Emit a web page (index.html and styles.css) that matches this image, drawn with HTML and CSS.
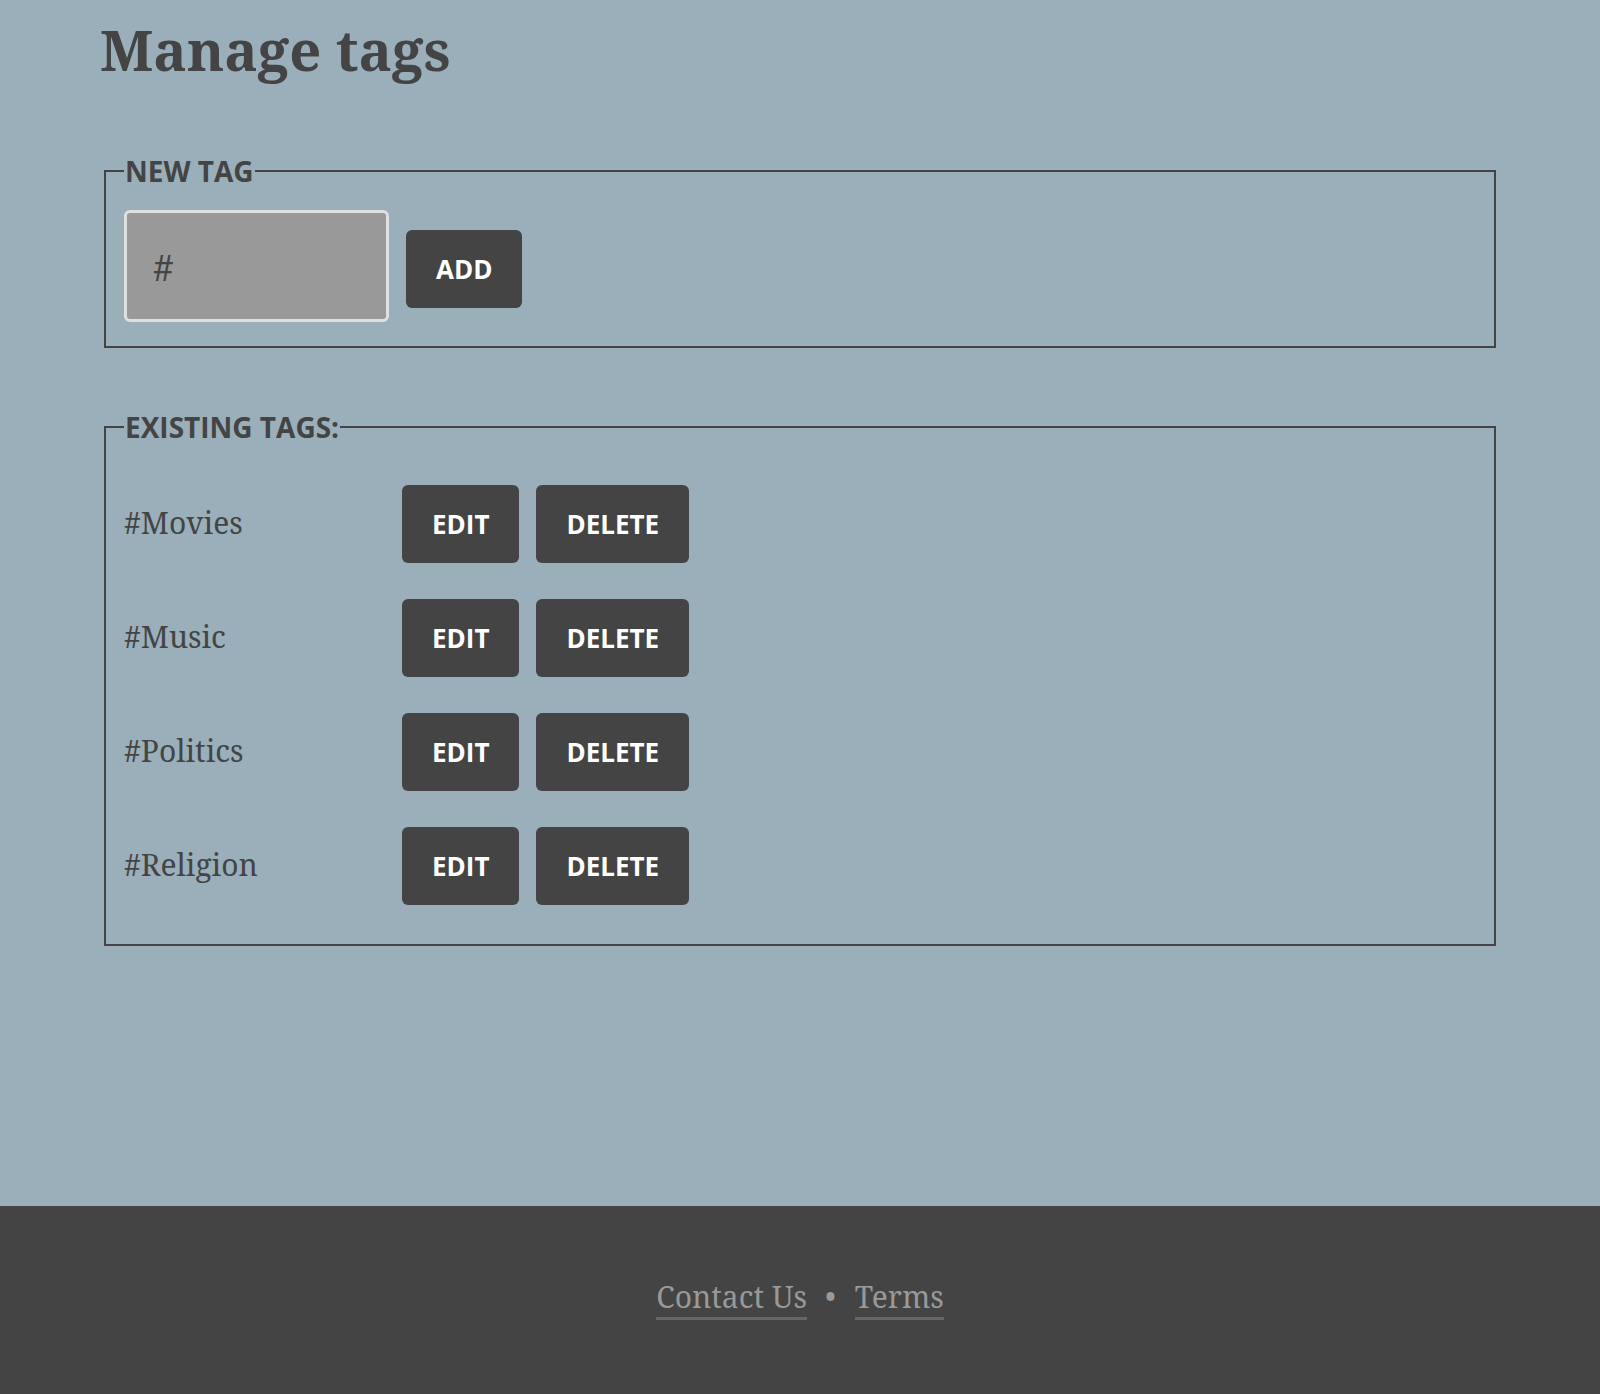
FILE: index.html
```html
<!DOCTYPE html>
<html lang="en">
<head>
<meta charset="utf-8">
<title>Manage tags</title>
<link rel="stylesheet" href="styles.css">
</head>
<body>
<div class="page">
  <main class="content">
    <h1 class="title">Manage tags</h1>

    <fieldset class="panel panel-new">
      <legend class="panel-legend">New tag</legend>
      <div class="new-row">
        <input class="tag-input" type="text" placeholder="#">
        <button class="btn btn-add" type="button">Add</button>
      </div>
    </fieldset>

    <fieldset class="panel panel-list">
      <legend class="panel-legend">Existing tags:</legend>
      <ul class="tag-list">
        <li class="tag-row">
          <span class="tag-name">#Movies</span>
          <button class="btn btn-edit" type="button">Edit</button>
          <button class="btn btn-delete" type="button">Delete</button>
        </li>
        <li class="tag-row">
          <span class="tag-name">#Music</span>
          <button class="btn btn-edit" type="button">Edit</button>
          <button class="btn btn-delete" type="button">Delete</button>
        </li>
        <li class="tag-row">
          <span class="tag-name">#Politics</span>
          <button class="btn btn-edit" type="button">Edit</button>
          <button class="btn btn-delete" type="button">Delete</button>
        </li>
        <li class="tag-row">
          <span class="tag-name">#Religion</span>
          <button class="btn btn-edit" type="button">Edit</button>
          <button class="btn btn-delete" type="button">Delete</button>
        </li>
      </ul>
    </fieldset>
  </main>

  <footer class="footer">
    <a class="footer-link" href="#">Contact Us</a>
    <span class="footer-sep">•</span>
    <a class="footer-link" href="#">Terms</a>
  </footer>
</div>
</body>
</html>
```

FILE: styles.css
```css
html, body {
  margin: 0;
  padding: 0;
}

body {
  background: #9aafba;
  color: #444444;
  font-family: "Noto Serif", "DejaVu Serif", serif;
}

.page {
  min-height: 100vh;
  display: flex;
  flex-direction: column;
}

.content {
  flex: 1;
  padding: 16px 100px 0 100px;
}

.title {
  margin: 0;
  font-size: 56px;
  line-height: 1.2;
  font-weight: 700;
  color: #444444;
}

.panel {
  margin: 0 4px;
  border: 2px solid #444444;
  padding: 20px 18px 24px 18px;
  min-width: 0;
}

.panel-new {
  margin-top: 69px;
}

.panel-list {
  margin-top: 60px;
  padding-top: 39px;
  padding-bottom: 39px;
}

.panel-legend {
  padding: 0 1px;
  font-family: "Open Sans", sans-serif;
  font-weight: 700;
  font-size: 28px;
  text-transform: uppercase;
  color: #444444;
}

.new-row {
  display: flex;
  align-items: flex-start;
  gap: 17px;
}

.tag-input {
  box-sizing: border-box;
  width: 265px;
  height: 112px;
  margin: 0;
  padding: 0 26px;
  border: 3px solid #e0e0e0;
  border-radius: 6px;
  background: #999999;
  color: #444444;
  font-family: "Noto Serif", "DejaVu Serif", serif;
  font-size: 37px;
  outline: none;
}

.tag-input::placeholder {
  color: #444444;
  opacity: 1;
}

.btn {
  box-sizing: border-box;
  height: 78px;
  margin: 0;
  padding: 0 30px;
  border: 0;
  border-radius: 6px;
  background: #444444;
  color: #ffffff;
  font-family: "Open Sans", sans-serif;
  font-weight: 700;
  font-size: 26px;
  line-height: 78px;
  text-transform: uppercase;
  cursor: pointer;
}

.btn-add {
  margin-top: 20px;
}

.tag-list {
  list-style: none;
  margin: 0;
  padding: 0;
  display: flex;
  flex-direction: column;
  gap: 36px;
}

.tag-row {
  display: flex;
  align-items: baseline;
  gap: 17px;
}

.tag-name {
  width: 261px;
  font-size: 30px;
  color: #444444;
}

.footer {
  box-sizing: border-box;
  height: 188px;
  padding-top: 71px;
  background: #444444;
  display: flex;
  justify-content: center;
  align-items: flex-start;
  font-size: 30px;
  line-height: 40px;
  color: #999999;
}

.footer-link {
  display: inline-block;
  color: #999999;
  text-decoration: none;
  border-bottom: 3px solid #666666;
}

.footer-sep {
  margin: 0 19px 0 18px;
  font-size: 30px;
}
```
